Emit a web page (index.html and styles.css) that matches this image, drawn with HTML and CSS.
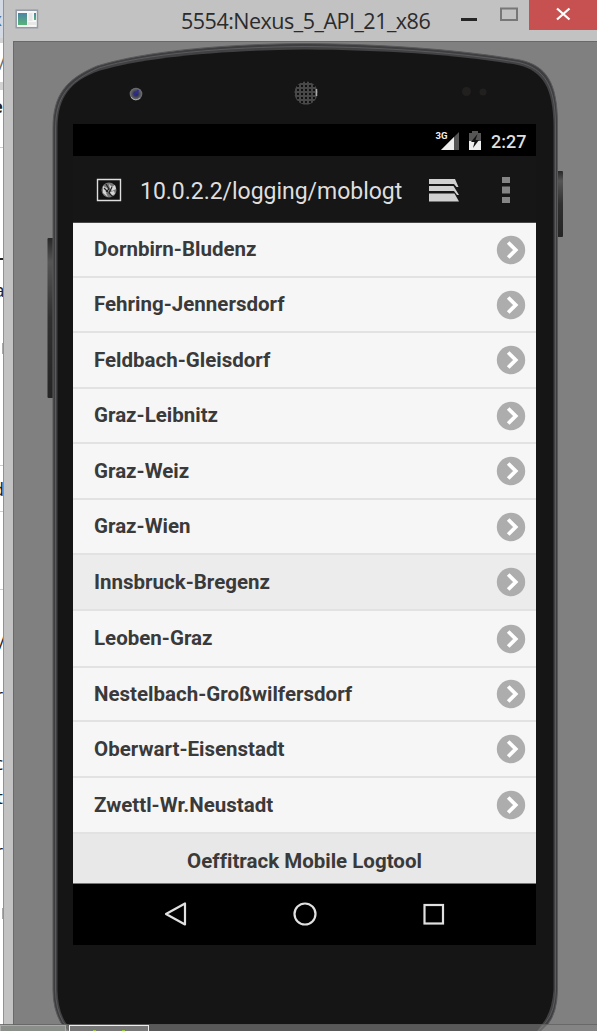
FILE: index.html
```html
<!DOCTYPE html>
<html lang="de">
<head>
<meta charset="utf-8">
<title>5554:Nexus_5_API_21_x86</title>
<link rel="stylesheet" href="styles.css">
</head>
<body>
<svg width="0" height="0" class="defs">
  <symbol id="chevron" viewBox="0 0 30 30"><circle cx="15" cy="15" r="14.2" fill="#adadad"/><path d="M12.2 7.5 19.7 15l-7.5 7.5" fill="none" stroke="#fff" stroke-width="3.8"/></symbol>
</svg>
<div class="desktop">
  <div class="behind">
    <svg width="4" height="1031">
      <path d="M0 0h4v38H0z" fill="#d3dae3"/><path d="M0 38h4v5H0zM0 82h4v8H0z" fill="#d2d2d2"/>
      <path d="M0 147.500h4M0 465.500h4M0 511.500h4M0 589.500h4" stroke="#ccc"/>
      <path d="M0 259h3" stroke="#222" stroke-width="2"/>
      <path d="M2 343h2v11H2zM2 908h2v11H2z" fill="#aaa"/>
      <g font-family="Open Sans, sans-serif" font-size="18" fill="#222" text-anchor="end">
        <text x="2" y="26" fill="#526e97">x</text><text x="5" y="70" fill="#666">/</text>
        <text x="3" y="113" font-weight="bold">e</text><text x="4.500" y="297">a</text>
        <text x="4" y="496">d</text><text x="5" y="649">/</text><text x="3" y="702">r</text>
        <text x="3" y="770">c</text><text x="3" y="804">t</text><text x="3" y="858">r</text>
      </g>
    </svg>
  </div>
  <div class="window">
    <header class="titlebar">
      <svg class="app-icon" width="24" height="20" viewBox="0 0 24 20">
        <defs><linearGradient id="pane" x2="0" y2="1"><stop stop-color="#4c83a7"/><stop offset="1" stop-color="#57b477"/></linearGradient></defs>
        <rect x="1.200" y="1.200" width="21.300" height="17.500" fill="#f7f7f7" stroke="#929ba4" stroke-width="1.500"/>
        <path d="M3 4h9v12H3z" fill="url(#pane)"/><path d="M13.500 4h4v8h-4zM13 13h8v3h-8z" fill="#e7e7e7"/><path d="M19 4h2v7h-2z" fill="url(#pane)"/>
      </svg>
      <h1 class="title">5554:Nexus_5_API_21_x86</h1>
      <svg class="controls" width="137" height="31" viewBox="0 0 137 31">
        <path d="M1 18h16v3H1z" fill="#252525"/><path d="M41 8.500h16v11.500H41z" fill="none" stroke="#777" stroke-width="2"/>
        <path d="M69 0h68v30H69z" fill="#c75050"/><path d="m97 8.500 12.500 11m0-11L97 19.500" stroke="#fff" stroke-width="2.300"/>
      </svg>
    </header>
    <main class="canvas">
      <svg class="device" width="584" height="990" viewBox="13 41 584 990">
        <defs>
          <linearGradient id="key" x2="0" y2="1"><stop stop-color="#282828"/><stop offset=".15" stop-color="#555"/><stop offset=".5" stop-color="#303030"/><stop offset="1" stop-color="#252525"/></linearGradient>
          <radialGradient id="lens"><stop stop-color="#202080"/><stop offset=".35" stop-color="#35354d"/><stop offset="1" stop-color="#757575"/></radialGradient>
          <pattern id="mesh" width="4" height="4" patternUnits="userSpaceOnUse"><rect width="4" height="4" fill="#484848"/><path d="M1 1h2v2H1z" fill="#111"/></pattern>
        </defs>
        <rect x="47.500" y="238" width="6" height="160" rx="1" fill="url(#key)"/>
        <rect x="557" y="171" width="6" height="66" rx="1" fill="url(#key)"/>
        <path d="M53 990V128C53 95 66 79 97 66 145 51 225 44 305 43.500 385 44 463 50 520 60 547 66 557 83 557.500 123V990Q557 1013 548 1024L538 1034H72L61 1023Q53 1009 53 990Z" fill="#3e3e40" stroke="#59595b" stroke-width="1"/>
        <path d="M55.500 990V129C55.500 98 67 82 99 68 145 54 225 47 305 46.500 385 47 463 53 519 62.500 545 69 555 86 555.500 124V990Q555 1011 546 1022L536 1034H74L63 1022Q55.500 1008 55.500 990Z" fill="#414143" stroke="#67676a" stroke-width=".7"/>
        <path d="M57.500 990V127C58 97 70 81 100 70.500 146 57 225 50 305 49.500 385 50 462 55 518 65 543 71 553 88 553.500 126V990Q552 1009 545 1020L535 1034H76L66 1023Q58 1011 57.500 990Z" fill="#151515"/>
        <circle cx="136" cy="94" r="6.300" fill="url(#lens)"/><path d="M131 97q4 5 9 1" fill="none" stroke="#aaa"/><path d="m134 94 3-1 1-3" fill="none" stroke="#2b2b9a" stroke-width="2"/>
        <circle cx="306" cy="93" r="11.500" fill="url(#mesh)"/><path d="M316.500 89v7" stroke="#aaa" stroke-width="1.500"/>
        <circle cx="466.500" cy="91.500" r="4.500" fill="#221f1f"/><circle cx="483" cy="92" r="3.500" fill="#221f1f"/>
      </svg>
      <section class="screen">
        <div class="status">
          <svg width="54" height="24" viewBox="434 130 54 24">
            <text x="435.500" y="139" font-family="Roboto, sans-serif" font-size="9" font-weight="700" fill="#eee" textLength="12" lengthAdjust="spacingAndGlyphs">3G</text>
            <path d="M459 132v18h-18z" fill="#555"/><path d="M454 137v13h-13z" fill="#eee"/>
            <path d="M469 133h3v-2h6v2h3v8h-12z" fill="#555"/><path d="M469 141h12v9h-12z" fill="#eee"/><path d="m477.500 134-6.500 8h3.500l-1.500 6 6-8h-3.500z" fill="#111"/>
          </svg>
          <span class="clock">2:27</span>
        </div>
        <div class="addressbar">
          <svg class="favicon" width="26" height="26" viewBox="0 0 26 26"><path d="M1.500 2.500h23v21h-23z" fill="#111" stroke="#dedede" stroke-width="1.400"/><circle cx="13" cy="13" r="7.500" fill="#777"/><path d="m7 9 4 2 2 3-3 2 2 4-5-4zM13 7l3 3 3-2 1 4-4 2-2-2zM14 15l4-1 1 3-4 2z" fill="#d5d5d5"/><path d="m10 7 3 5-3 3m6-5-3 6 4 4M8 11l4 4" stroke="#222" stroke-width="1.200" fill="none"/></svg>
          <span class="url">10.0.2.2/logging/moblogt</span>
          <svg class="tabs" width="32" height="24" viewBox="0 0 32 24"><path d="M1 1h26l3.500 8h-2L26 6H1zM1 8h24.500L31 17h-2l-3-4H1zM1 15.500h25.500L31 23.500H1z" fill="#d0d0d0"/></svg>
          <svg class="more" width="8" height="28" viewBox="0 0 8 28"><path d="M0 1h8v6H0zM0 10.500h8v7H0zM0 21h8v6H0z" fill="#858585"/></svg>
        </div>
        <ul class="routes">
          <li><span>Dornbirn-Bludenz</span><svg><use href="#chevron"/></svg></li>
          <li><span>Fehring-Jennersdorf</span><svg><use href="#chevron"/></svg></li>
          <li><span>Feldbach-Gleisdorf</span><svg><use href="#chevron"/></svg></li>
          <li><span>Graz-Leibnitz</span><svg><use href="#chevron"/></svg></li>
          <li><span>Graz-Weiz</span><svg><use href="#chevron"/></svg></li>
          <li><span>Graz-Wien</span><svg><use href="#chevron"/></svg></li>
          <li class="active"><span>Innsbruck-Bregenz</span><svg><use href="#chevron"/></svg></li>
          <li><span>Leoben-Graz</span><svg><use href="#chevron"/></svg></li>
          <li><span>Nestelbach-Großwilfersdorf</span><svg><use href="#chevron"/></svg></li>
          <li><span>Oberwart-Eisenstadt</span><svg><use href="#chevron"/></svg></li>
          <li><span>Zwettl-Wr.Neustadt</span><svg><use href="#chevron"/></svg></li>
        </ul>
        <footer class="footer"><span>Oeffitrack Mobile Logtool</span></footer>
        <nav class="navbar">
          <svg width="24" height="26" viewBox="0 0 24 26"><path d="M21 2.500v21L2 13z" fill="none" stroke="#e0e0e0" stroke-width="2.200" stroke-linejoin="round"/></svg>
          <svg width="24" height="26" viewBox="0 0 24 26"><circle cx="12" cy="13" r="10.500" fill="none" stroke="#e0e0e0" stroke-width="2.200"/></svg>
          <svg width="24" height="26" viewBox="0 0 24 26"><rect x="2.500" y="4" width="18.500" height="18.500" fill="none" stroke="#e0e0e0" stroke-width="2.200"/></svg>
        </nav>
      </section>
    </main>
  </div>
  <div class="taskbar"><div class="task idle"></div><div class="task current"><i></i><i></i></div></div>
</div>
</body>
</html>
```

FILE: styles.css
```css
* { box-sizing: border-box; }
body { margin: 0; overflow: hidden; font-family: Roboto, sans-serif; font-variant-ligatures: none; }
svg { display: block; flex: none; }
.defs { position: absolute; }
.desktop { position: relative; display: flex; width: 597px; height: 1031px; overflow: hidden; background: #fff; }
.behind { width: 3px; overflow: hidden; background: #fff; }
.window { width: 594px; background: #c2c2c2; border-left: 1px solid #929292; }
.titlebar { display: flex; height: 41px; }
.app-icon { margin: 9px 0 0 11px; }
.title { width: 250px; margin: 6px 0 0 142px; font: 400 21.500px/30px "Open Sans", sans-serif; letter-spacing: -.5px; color: #2b2b2b; white-space: nowrap; }
.controls { margin-left: auto; }
.canvas { position: relative; height: 990px; margin-left: 9px; padding: 82px 0 0 59px; background: #808080; border: 1px solid #696969; border-width: 1px 0 0 1px; }
.device { position: absolute; left: -1px; top: -1px; }
.screen { position: relative; width: 463px; height: 821px; background: #000; }
.status { display: flex; height: 32px; padding: 6px 10px 0 361px; }
.clock { margin-left: 3px; font-size: 18px; line-height: 24px; font-weight: 500; color: #dedede; }
.addressbar { display: flex; height: 67px; background: #161616; border-bottom: 1px solid #484848; }
.favicon { margin: 21px 0 0 23px; }
.url { width: 263px; margin: 21px 0 0 18px; font-size: 23px; line-height: 30px; letter-spacing: -.03px; color: #dedede; white-space: nowrap; }
.tabs { margin: 22px 0 0 25px; }
.more { margin: 20px 0 0 42px; }
.routes { display: grid; grid-template-rows: 55px 55px 56px 55px 56px 55px 56px 57px 54px 56px 56px; margin: 0; padding: 0; list-style: none; }
.routes li { display: flex; align-items: center; justify-content: space-between; padding: 0 10px 0 21px; background: #f6f6f6; border-bottom: 2px solid #e2e2e2; color: #3a3a3a; font-size: 20.500px; font-weight: 700; }
.routes li.active { background: #ececec; }
.routes span { padding-bottom: 1px; }
.routes svg { width: 30px; height: 30px; }
.footer { display: flex; align-items: center; justify-content: center; height: 50px; padding-top: 5px; background: #e8e8e8; border-bottom: 1px solid #777; font-size: 20.500px; font-weight: 700; color: #3a3a3a; }
.navbar { display: flex; justify-content: space-between; padding: 17px 90px 0 91px; }
.taskbar { position: absolute; left: 0; right: 0; bottom: 0; display: flex; gap: 3px; height: 7px; background: rgba(135, 135, 135, .6); border-top: 1px solid rgba(85, 85, 85, .6); }
.task { border: 1px solid #ccc; border-bottom: 0; }
.idle { width: 66px; background: #8a8f8a; border-color: #aaa; }
.current { display: flex; width: 80px; padding: 4px 23px 0; justify-content: space-between; background: #777; border-color: #eee; }
.current i { width: 3px; height: 2px; background: #93c83d; }
```
